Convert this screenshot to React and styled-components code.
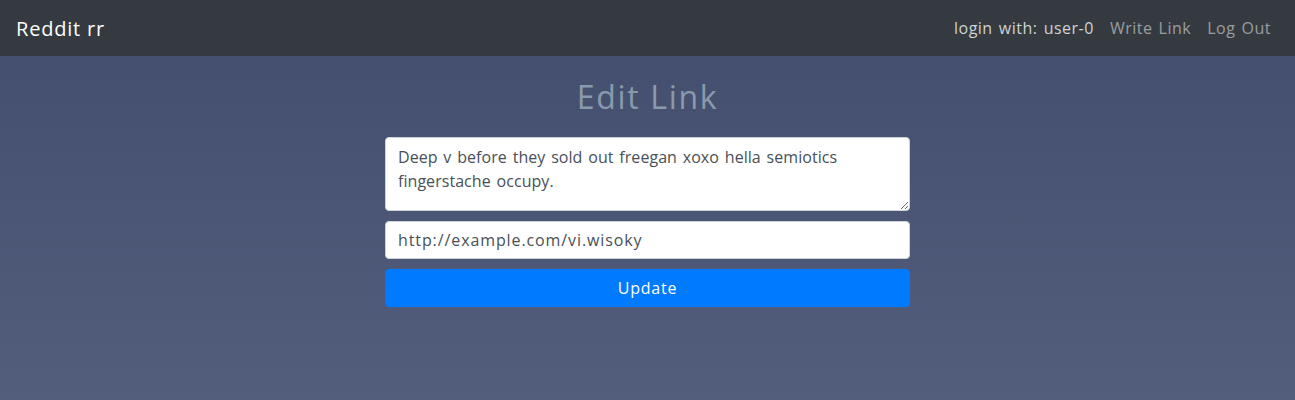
import React, { useState } from 'react';
import styled, { createGlobalStyle } from 'styled-components';

const GlobalStyle = createGlobalStyle`
  html, body {
    margin: 0;
    padding: 0;
  }
  body {
    font-family: "Open Sans", "Noto Sans", sans-serif;
    background: #454f6f;
  }
  * { box-sizing: border-box; }
`;

const Page = styled.div`
  min-height: 400px;
  background: linear-gradient(180deg, #424d6d 0%, #535e7d 100%);
`;

const NavBar = styled.nav`
  height: 56px;
  background: #343a40;
  display: flex;
  align-items: center;
  justify-content: space-between;
  padding: 0 16px;
`;

const Brand = styled.a`
  color: #fff;
  font-size: 20px;
  letter-spacing: 0.8px;
  text-decoration: none;
`;

const NavLinks = styled.div`
  display: flex;
  align-items: center;
`;

const NavItem = styled.a`
  padding: 0 8px;
  font-size: 16px;
  letter-spacing: 0.5px;
  word-spacing: 1.5px;
  color: ${p => (p.$active ? 'rgba(255,255,255,0.78)' : 'rgba(255,255,255,0.5)')};
  text-decoration: none;
  &:last-child { padding-right: 8px; }
`;

const Main = styled.main`
  width: 525px;
  margin: 0 auto;
  display: flex;
  flex-direction: column;
  gap: 10px;
`;

const Title = styled.h1`
  margin: 20px 0 9px;
  font-size: 32px;
  font-weight: 400;
  line-height: 42px;
  letter-spacing: 1.7px;
  text-align: center;
  color: #8a9aac;
`;

const TextArea = styled.textarea`
  display: block;
  width: 100%;
  height: 74px;
  padding: 7px 12px;
  font: inherit;
  font-size: 16px;
  line-height: 24px;
  word-spacing: 1.6px;
  letter-spacing: 0.05px;
  color: #495057;
  background: #fff;
  border: 1px solid #ced4da;
  border-radius: 4px;
  resize: vertical;
`;

const Input = styled.input`
  display: block;
  width: 100%;
  height: 38px;
  padding: 6px 12px;
  font: inherit;
  font-size: 16px;
  letter-spacing: 0.9px;
  color: #495057;
  background: #fff;
  border: 1px solid #ced4da;
  border-radius: 4px;
`;

const Button = styled.button`
  height: 38px;
  width: 100%;
  font: inherit;
  font-size: 16px;
  letter-spacing: 0.8px;
  color: #fff;
  background: #007bff;
  border: 1px solid #007bff;
  border-radius: 4px;
`;

export default function App() {
  const [title, setTitle] = useState(
    'Deep v before they sold out freegan xoxo hella semiotics fingerstache occupy.'
  );
  const [url, setUrl] = useState('http://example.com/vi.wisoky');

  return (
    <Page>
      <GlobalStyle />
      <NavBar>
        <Brand href="#">Reddit rr</Brand>
        <NavLinks>
          <NavItem $active>login with: user-0</NavItem>
          <NavItem href="#">Write Link</NavItem>
          <NavItem href="#">Log Out</NavItem>
        </NavLinks>
      </NavBar>
      <Main>
        <Title>Edit Link</Title>
        <TextArea value={title} onChange={e => setTitle(e.target.value)} />
        <Input value={url} onChange={e => setUrl(e.target.value)} />
        <Button>Update</Button>
      </Main>
    </Page>
  );
}
